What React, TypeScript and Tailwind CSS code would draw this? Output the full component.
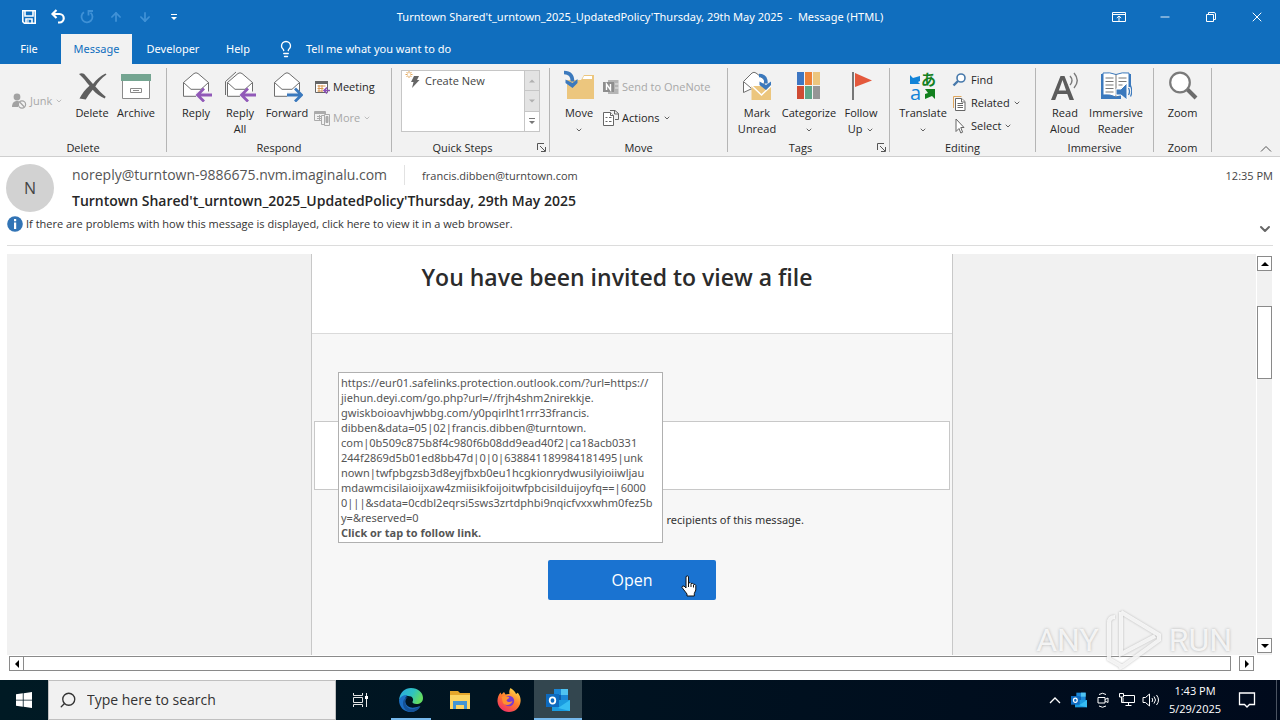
import * as React from "react";
import { clsx } from "clsx";
import { ArrowDown, ArrowUp, ChevronDown, Lightbulb, Minus, Search, X } from "lucide-react";

type IconProps = { className?: string };

/* ---------- Title bar icons ---------- */

const SaveIcon = () => (
    <svg viewBox="0 0 16 16" className="w-4 h-4" fill="none" stroke="currentColor" strokeWidth="1.6">
        <path d="M1.8 1.8h12.4v12.4H3.4L1.8 12.6z" />
        <path d="M4 2v5h8V2M5 14v-4h6v4" />
        <path d="M7 11v3" strokeWidth="1.2" />
    </svg>
);

const UndoIcon = () => (
    <svg viewBox="0 0 16 16" className="w-4 h-4" fill="none" stroke="currentColor" strokeWidth="2.2">
        <path d="M6.5 1 2.5 5l4 4M3 5h6.5a4.2 4.2 0 0 1 0 8.5H8" />
    </svg>
);

const RedoIcon = () => (
    <svg viewBox="0 0 16 16" className="w-4 h-4" fill="none" stroke="currentColor" strokeWidth="1.8">
        <path d="M5 3.2A5.5 5.5 0 1 0 11.5 3.6M14 2H9.5v4.5" />
    </svg>
);

const CustomizeIcon = () => (
    <svg viewBox="0 0 8 8" className="w-2 h-2" fill="currentColor">
        <path d="M1 1h6v1H1zM1 4h6L4 7z" />
    </svg>
);

const RibbonOptionsIcon = () => (
    <svg viewBox="0 0 14 12" className="w-3.5 h-3" fill="none" stroke="currentColor">
        <path d="M.5 1.5h13v9H.5zM.5 3.5h13M7 10V5M4.8 7 7 5l2.2 2" />
    </svg>
);

const RestoreIcon = () => (
    <svg viewBox="0 0 12 12" className="w-3 h-3" fill="none" stroke="currentColor">
        <path d="M1.5 3.5h7v7h-7zM3.5 3.5v-2H9A1.5 1.5 0 0 1 10.5 3v5.5h-2" />
    </svg>
);

/* ---------- Ribbon icons ---------- */

const JunkIcon = () => (
    <svg viewBox="0 0 16 16" className="w-4 h-4">
        <circle cx="6" cy="4" r="3.4" fill="#a3a3a3" />
        <path d="M1 14c0-4 2-6 5-6 1.5 0 2 .4 2.5.8L7 14z" fill="#a3a3a3" />
        <circle cx="11" cy="11.5" r="3.6" fill="#f2f2f2" stroke="#a3a3a3" strokeWidth="1.2" />
        <path d="m8.6 9 4.8 5" stroke="#a3a3a3" strokeWidth="1.2" />
    </svg>
);

const DeleteIcon = () => (
    <svg viewBox="0 0 32 32" className="w-8 h-8" fill="#5f5f5f">
        <path d="M3 4c2.5-1.5 5-1 6.5 1.5L17 14C20.5 9.5 24.5 6 29.5 3.5l1 .9C25.5 8 22 12 19.3 16.5c3 3.5 6.4 7 10.4 10.3l-1 1.8c-4.7-2-8.7-5-12-8.8-2.7 3-5 6.2-7 9.7L3.5 28.5C6 23.5 9.5 19.5 13.5 15.8 10 11.5 7 7.5 3 4z" />
    </svg>
);

const ArchiveIcon = () => (
    <svg viewBox="0 0 32 32" className="w-8 h-8">
        <path d="M2.5 9.5h27v19h-27z" fill="#fff" stroke="#8a8a8a" />
        <path d="M1 4h30v7H1z" fill="#74a591" />
        <path d="M10.5 18.5h11v4h-11z" fill="#fff" stroke="#8a8a8a" />
        <path d="M13 20.5h6" stroke="#8a8a8a" />
    </svg>
);

const Envelope = ({ double = false }: { double?: boolean }) => (
    <>
        {double && <path d="M1.5 25V11.5L12 2" fill="none" stroke="#6e6e6e" />}
        <path d="M3.5 12.5 14 3.5q2-1.4 4 0l10.5 9v13.8h-25z" fill="#fff" stroke="#6e6e6e" />
        <path d="m3.5 12.5 7.5 6.8h10l7.5-6.8" fill="none" stroke="#6e6e6e" />
    </>
);

const ReplyIcon = ({ double = false }: { double?: boolean }) => (
    <svg viewBox="0 0 32 32" className="w-8 h-8">
        <Envelope double={double} />
        <path d="M16 25h16" stroke="#f2f2f2" strokeWidth="7" />
        <path d="M32 25H18M24 18.5 17.5 25l6.5 6.5" fill="none" stroke="#9159b8" strokeWidth="2.8" />
    </svg>
);

const ForwardIcon = () => (
    <svg viewBox="0 0 32 32" className="w-8 h-8">
        <Envelope />
        <path d="M16 25h16" stroke="#f2f2f2" strokeWidth="7" />
        <path d="M16 25h14M24 18.5l6.5 6.5-6.5 6.5" fill="none" stroke="#3b79bd" strokeWidth="2.8" />
    </svg>
);

const MeetingIcon = () => (
    <svg viewBox="0 0 16 16" className="w-4 h-4">
        <path d="M1.5 2.5h12v11h-12z" fill="#fff" stroke="#666" />
        <path d="M1 2h13v3H1z" fill="#666" />
        <path d="M3.5 7h8M3.5 9.5h6M3.5 12h5M5 6v7M8 6v7" stroke="#d89752" fill="none" />
        <path d="M16 11.5h-5.5M13 8.5l-3 3 3 3" fill="none" stroke="#8a4fb5" strokeWidth="1.6" />
    </svg>
);

const MoreIcon = () => (
    <svg viewBox="0 0 16 16" className="w-4 h-4" fill="none" stroke="#ababab">
        <path d="M.5 1.5h11v9H.5z" />
        <path d="M.5 3h11" strokeWidth="2" />
        <path d="M3 6.5h5M3 8.5h5M5.5 5v5" />
        <path d="M7.5 5.5h3v9h-3zM10.5 4.5h5v11h-5z" fill="#f2f2f2" />
        <path d="M12 6.5h2v6h-2z" fill="#ababab" />
    </svg>
);

const QuickStepIcon = () => (
    <svg viewBox="0 0 16 18" className="w-4 h-[18px]">
        <path d="M9 5h5l-2 4h2.5L7 17l1.5-6H6z" fill="#666" />
        <path d="M4 0v7M.5 3.5h7M1.5 1l5 5M6.5 1l-5 5" stroke="#e0a558" />
        <circle cx="4" cy="3.5" r="1.5" fill="#fff" />
    </svg>
);

const MoveIcon = () => (
    <svg viewBox="0 0 32 32" className="w-8 h-8">
        <path d="M4 10h14l3-5h10v24H4z" fill="#ecc67e" />
        <path d="M21 6h8v3h-9.5z" fill="#fff" />
        <path d="M1 2.5c5 0 8.5 2 8.5 9" fill="none" stroke="#3b79bd" strokeWidth="3.6" />
        <path d="M2.5 9.5v3.5l7 5 5-5V9l-5 4z" fill="#3b79bd" />
    </svg>
);

const OneNoteIcon = () => (
    <svg viewBox="0 0 16 16" className="w-4 h-4">
        <path d="M5 1h10.5v14H5z" fill="#b5b5b5" />
        <path d="M12 5h3.5M12 9h3.5" stroke="#e8e8e8" />
        <path d="M0 3h11v10H0z" fill="#8e8e8e" />
        <path d="M3.5 11V5l4 6V5" fill="none" stroke="#fff" strokeWidth="1.4" />
    </svg>
);

const ActionsIcon = () => (
    <svg viewBox="0 0 16 16" className="w-4 h-4" fill="#fff" stroke="#666">
        <path d="M.5 2.5h7l3 3v10H.5z" />
        <path d="M2.5 7.5h2M2.5 11.5h2M6 7.5h2.5M6 11.5h2.5M7.5 2.5v3h3" />
        <path d="M7 .5h5l3.5 3v6H12M11.5.5v3.5h4" fill="none" />
    </svg>
);

const MarkUnreadIcon = () => (
    <svg viewBox="0 0 32 32" className="w-8 h-8">
        <path d="M2.5 22.5v-11L11 3q2-1.5 4 0l9 7-2 8-12 1-7.500 3.5z" fill="#fff" stroke="#6e6e6e" />
        <path d="m3 12 7 6" stroke="#6e6e6e" />
        <path d="M10.5 16H30v14H10.5z" fill="#ecc67e" />
        <path d="m11 16 9.5 9 9.5-9" fill="none" stroke="#fff" strokeWidth="1.5" />
        <path d="M18 5.5c5 0 7 2 7 8" fill="none" stroke="#3b79bd" strokeWidth="3.6" />
        <path d="M18.5 11.5v3.5l6.5 5 5-5v-3.5l-5 3.5z" fill="#3b79bd" />
    </svg>
);

const CategorizeIcon = () => (
    <svg viewBox="0 0 32 32" className="w-8 h-8">
        <path d="M4 2h7v13H4z" fill="#3d76c2" />
        <path d="M12 2h7v13h-7z" fill="#ec8138" />
        <path d="M20 2h7v13h-7z" fill="#ecc67e" />
        <path d="M4 16h7v13H4z" fill="#cf4b33" />
        <path d="M12 16h7v13h-7z" fill="#5fa588" />
        <path d="M20 16h7v13h-7z" fill="#969696" />
    </svg>
);

const FlagIcon = () => (
    <svg viewBox="0 0 32 32" className="w-8 h-8">
        <path d="M8 2v28" stroke="#777" strokeWidth="2" />
        <path d="m10 3 17 7.5L10 17z" fill="#e4593c" />
    </svg>
);

const TranslateIcon = () => (
    <svg viewBox="0 0 32 32" className="w-8 h-8 overflow-visible">
        <path d="M3 5l3 3 7-2v5l-2 1 2 2H3z" fill="#1283d8" />
        <path d="M18 19h10v10l-3-3-7 3v-5l3-1z" fill="#13801f" />
        <text x="14" y="15" fontSize="15" fontWeight="700" fill="#13801f" className="font-['Noto_Sans_CJK_JP',sans-serif]">あ</text>
        <text x="3" y="30" fontSize="20" fill="#1283d8" className="font-['Open_Sans',sans-serif]">a</text>
    </svg>
);

const FindIcon = () => (
    <svg viewBox="0 0 16 16" className="w-4 h-4" fill="none" stroke="#4779ab">
        <circle cx="9" cy="6" r="4" strokeWidth="1.6" fill="#fff" />
        <path d="m6 9-4.5 4.5" strokeWidth="2.4" />
    </svg>
);

const RelatedIcon = () => (
    <svg viewBox="0 0 16 16" className="w-4 h-4" fill="#fff">
        <path d="M1.5 13V1.5h8" fill="none" stroke="#dfa75f" />
        <path d="M3.5 3.5h6l3.5 3v9H3.5z" stroke="#666" />
        <path d="M9.5 3.5v3.5h3.5M5.5 8.5h5.5M5.5 10.5h5.5M5.5 12.5h5.5" stroke="#666" />
    </svg>
);

const SelectIcon = () => (
    <svg viewBox="0 0 16 16" className="w-4 h-4">
        <path d="M4 1v12.5l3-3 1.8 4.5 1.8-.8L8.8 9.5H12z" fill="#fff" stroke="#666" />
    </svg>
);

const ReadAloudIcon = () => (
    <svg viewBox="0 0 32 32" className="w-8 h-8">
        <path d="M2 30 11.5 6h4L25 30h-4.500l-2.200-6H8.500l-2.300 6zM9.800 20.500h7.300L13.500 10z" fill="#5b5b5b" />
        <path d="M21 6q4 4.500 0 9M25 3q6.500 7.500 0 15" fill="none" stroke="#7a7a7a" strokeWidth="1.4" />
    </svg>
);

const ImmersiveReaderIcon = () => (
    <svg viewBox="0 0 32 32" className="w-8 h-8">
        <path d="M1 4h30v25H1z" fill="#3b79bd" />
        <path d="M3 3q7-1 13 1.500Q22 2 29 3v22q-7-1-13 2-6-3-13-2z" fill="#fff" stroke="#3b79bd" />
        <path d="M16 4.500V27M5.500 8h8M5.500 11.500h8M5.500 15h8M5.500 18.500h8M5.500 22h8M18.500 8h8M18.500 11.500h8M18.500 15h4" stroke="#777" fill="none" />
        <path d="M21 17h11v15H21z" fill="#f2f2f2" />
        <path d="M16 19h5l6-6v17l-6-5h-5z" fill="#3b79bd" stroke="#fff" />
        <path d="M28.500 18q2 3.500 0 7M30.500 15.500q2.500 6 0 11" fill="none" stroke="#3b79bd" strokeWidth="1.3" />
    </svg>
);

const ZoomIcon = () => (
    <svg viewBox="0 0 32 32" className="w-8 h-8">
        <path d="m20 19 9 9" stroke="#6b6b6b" strokeWidth="4" />
        <circle cx="13" cy="12.5" r="9.8" fill="#fff" stroke="#7a7a7a" strokeWidth="2.2" />
    </svg>
);

const LauncherIcon = () => (
    <svg viewBox="0 0 9 9" className="w-[9px] h-[9px]" fill="none" stroke="#555">
        <path d="M.5 7V.5H7M3 3l5 5M8.5 4v4.5H4" />
    </svg>
);

/* ---------- Taskbar icons ---------- */

const WindowsIcon = () => (
    <svg viewBox="0 0 16 16" className="w-4 h-4" fill="#fff">
        <path d="M0 2.3 6.8 1.3v6.4H0zM7.6 1.2 16 0v7.7H7.6zM0 8.4h6.8v6.4L0 13.8zM7.6 8.4H16V16l-8.4-1.2z" />
    </svg>
);

const TaskViewIcon = () => (
    <svg viewBox="0 0 16 16" className="w-4 h-4" fill="none" stroke="#e6e6e6">
        <path d="M1.5 1v2.5h9V1M1.5 15v-2.5h9V15M1.5 5.5h9v5h-9zM14.5 1v14" />
        <path d="M13 4h3v3h-3z" fill="#fff" stroke="none" />
    </svg>
);

const EdgeIcon = () => (
    <svg viewBox="0 0 24 24" className="w-6 h-6">
        <defs>
            <linearGradient id="edgeTop" x1="0" y1="0" x2="1" y2="0.4">
                <stop offset="0" stopColor="#2aa6e6" />
                <stop offset="0.6" stopColor="#2fc3c0" />
                <stop offset="1" stopColor="#62dc62" />
            </linearGradient>
        </defs>
        <path d="M0 12C1 4 6 0 12 0c7 0 12 4.5 12 10 0 4-3 6-6.5 6-3 0-4.5-1-4-2.2 1.4-2 .7-5.8-4.5-5.8-4 0-7.5 1.5-9 4z" fill="url(#edgeTop)" />
        <path d="M0 12c1.5-4 5-5.5 9-5-3 2-3.5 5-2.5 8 1.2 4 6 6.5 14.5 3-2 4-5.5 6-9.5 6C5 24 0 19 0 12z" fill="#1c6fc4" />
        <path d="M9 9c-3 2-3.3 6-1.5 9 2.5 4 8.5 3.5 14 0-1.5 3.5-5 6-9 6-5 0-8.5-4-8.5-8.5C4 12 6 9.5 9 9z" fill="#155297" />
    </svg>
);

const ExplorerIcon = () => (
    <svg viewBox="0 0 24 24" className="w-6 h-6">
        <path d="M2 3h8l2 2h10v16H2z" fill="#e5a72c" />
        <path d="M2 7h20v14H2z" fill="#fcd563" />
        <path d="M5 13h14v8h-3v-4H8v4H5z" fill="#4295d3" />
    </svg>
);

const FirefoxIcon = () => (
    <svg viewBox="0 0 24 24" className="w-6 h-6">
        <defs>
            <linearGradient id="foxBody" x1="0.8" y1="0" x2="0.2" y2="1">
                <stop offset="0" stopColor="#ffe14a" />
                <stop offset="0.5" stopColor="#ff7a2c" />
                <stop offset="1" stopColor="#f02a6b" />
            </linearGradient>
        </defs>
        <path d="M13.5 0c3 2 5 4 5.5 6l1.8-1.2C23 7.5 24 10.5 23.5 14 22.6 20 18 24 12 24S1 19.5.5 13.5C.3 10 1.5 7 3.5 4.500l1 2L7 4l1.5 2.500c2-.5 3.500-.5 4-.5-.5-2-.3-4 1-6z" fill="url(#foxBody)" />
        <circle cx="12" cy="13" r="5.2" fill="#7a3ad0" />
        <path d="M4.5 9c3-2 5 0 7.5 0 1 1.5-2 2-2.5 3.5 1 2 4 2 6 .5-1 4-7 5.5-9.5 2C5 13 5.500 11 4.500 9z" fill="#ff9130" />
    </svg>
);

const OutlookIcon = ({ className }: IconProps) => (
    <svg viewBox="0 0 24 24" className={className}>
        <path d="M8 1h14v12H8z" fill="#1a86d6" />
        <path d="M15 1h7v6h-7z" fill="#50c3f0" />
        <path d="M8 7h7v6H8z" fill="#0f5ea8" />
        <path d="M6 12h18v11H6z" fill="#1a9be0" />
        <path d="m24 12-12 8 12 3z" fill="#36bdf2" />
        <path d="M0 6h13v13H0z" fill="#0d6abf" />
        <ellipse cx="6.5" cy="12.5" rx="2.8" ry="3.2" fill="none" stroke="#fff" strokeWidth="1.8" />
    </svg>
);

const CameraIcon = () => (
    <svg viewBox="0 0 16 16" className="w-4 h-4" fill="none" stroke="#fff">
        <path d="M3 5.5h7v5.5H3zM10 7.500l3-1.5v4.500L10 9M4 2.500q3.500-2.500 7 0M4 14q3.500 2.500 7 0" />
    </svg>
);

const NetworkIcon = () => (
    <svg viewBox="0 0 16 16" className="w-4 h-4" fill="none" stroke="#fff">
        <path d="M5 3.5h10.5v7H4V6M9.5 10.5v3M6.5 13.5h6" />
        <path d="M.5 1.5h4v3.5h-4zM2.5 5v5.5H4" />
    </svg>
);

const SpeakerIcon = () => (
    <svg viewBox="0 0 18 16" className="w-[18px] h-4" fill="none" stroke="#fff">
        <path d="M1 5.5h2.5l4-3.5v12l-4-3.5H1zM10 6q1.5 2 0 4M12 4.5q3 3.5 0 7M14.5 3q4 5 0 10" />
    </svg>
);

const NoticeIcon = () => (
    <svg viewBox="0 0 18 18" className="w-[18px] h-[18px]" fill="none" stroke="#fff" strokeWidth="1.3">
        <path d="M1.5 2h15v11.5h-5L9 16l-2.5-2.5h-5z" />
    </svg>
);

const HandCursor = ({ className }: IconProps) => (
    <svg viewBox="0 0 16 22" className={className}>
        <path
            d="M5 1.5q1.5-1.2 2.5 0V8q2-1 2.5.5 2-.8 2.5.8 2-.5 2.3 1.2V15l-1.5 3.5V21H6v-2L1 12.5q0-2 2-1.5l2 2z"
            fill="#fff"
            stroke="#111"
        />
        <path d="M7.5 8v4M10 9v3M12.5 10v2.5" stroke="#111" fill="none" />
    </svg>
);

/* ---------- Ribbon pieces ---------- */

const Caret = () => <ChevronDown className="inline w-2 h-2 opacity-70" strokeWidth={3} />;

interface RibbonGroupProps {
    label: string;
    className: string;
    inset?: string;
    launcher?: boolean;
    children: React.ReactNode;
}

const RibbonGroup: React.FC<RibbonGroupProps> = ({ label, className, inset, launcher, children }) => (
    <section aria-label={label} className={clsx("relative flex flex-col shrink-0 my-1 border-r border-[#b5b5b5]", className)}>
        <div className={clsx("flex shrink-0 h-[72px] pt-0.5", inset)}>{children}</div>
        <div className={clsx("text-center leading-4", launcher && "pr-4")}>{label}</div>
        {launcher && (
            <button aria-label={`${label} settings`} className="absolute right-[3px] bottom-0">
                <LauncherIcon />
            </button>
        )}
    </section>
);

interface BigButtonProps {
    icon: React.ReactNode;
    lines: string[];
    className: string;
    menu?: "below" | "inline";
}

const BigButton: React.FC<BigButtonProps> = ({ icon, lines, className, menu }) => (
    <button className={clsx("flex flex-col items-center shrink-0 leading-4 whitespace-nowrap", className)}>
        {icon}
        <span className="pt-[3px]">
            {lines.map((line, i) => (
                <span key={line} className="block">
                    {line}
                    {menu === "inline" && i === lines.length - 1 && <span className="pl-1"><Caret /></span>}
                </span>
            ))}
            {menu === "below" && <span className="block"><Caret /></span>}
        </span>
    </button>
);

interface SmallButtonProps {
    icon: React.ReactNode;
    label: string;
    menu?: boolean;
    disabled?: boolean;
}

const SmallButton: React.FC<SmallButtonProps> = ({ icon, label, menu, disabled }) => (
    <button disabled={disabled} className={clsx("flex items-center gap-[3px] h-5 whitespace-nowrap", disabled && "text-[#a8a8a8]")}>
        {icon}
        {label}
        {menu && <Caret />}
    </button>
);

const Ribbon = () => (
    <div className="flex h-[93px] bg-[#f2f2f2] border-b border-[#cfcfcf] text-[#262626]">
        <RibbonGroup label="Delete" className="w-[167px]">
            <div className="w-[70px] pt-[21px] pl-[11px]">
                <SmallButton icon={<JunkIcon />} label="Junk" menu disabled />
            </div>
            <BigButton icon={<DeleteIcon />} lines={["Delete"]} className="w-11" />
            <BigButton icon={<ArchiveIcon />} lines={["Archive"]} className="w-11" />
        </RibbonGroup>
        <RibbonGroup label="Respond" className="w-[225px]" inset="pl-[7px]">
            <BigButton icon={<ReplyIcon />} lines={["Reply"]} className="w-11" />
            <BigButton icon={<ReplyIcon double />} lines={["Reply", "All"]} className="w-11" />
            <BigButton icon={<ForwardIcon />} lines={["Forward"]} className="w-[50px]" />
            <div className="flex flex-col gap-[11px] pt-[7px] pl-0.5">
                <SmallButton icon={<MeetingIcon />} label="Meeting" />
                <SmallButton icon={<MoreIcon />} label="More" menu disabled />
            </div>
        </RibbonGroup>
        <RibbonGroup label="Quick Steps" className="w-[158px]" inset="px-[9px]" launcher>
            <div className="flex w-full h-[62px] bg-white border border-[#c6c6c6] text-[#444]">
                <button className="flex items-start gap-1 flex-1 pl-[3px]">
                    <QuickStepIcon />
                    <span className="pt-0.5">Create New</span>
                </button>
                <div className="flex flex-col w-[15px] border-l border-[#c6c6c6] text-[#777]">
                    <button aria-label="Scroll up" className="flex flex-1 items-center justify-center bg-[#e3e3e3] text-[#b0b0b0]">
                        <svg viewBox="0 0 8 4" className="w-1.5 h-1" fill="currentColor"><path d="M0 4 4 0l4 4z" /></svg>
                    </button>
                    <button aria-label="Scroll down" className="flex flex-1 items-center justify-center bg-[#e3e3e3] border-y border-[#c6c6c6] text-[#b0b0b0]">
                        <svg viewBox="0 0 8 4" className="w-1.5 h-1" fill="currentColor"><path d="m0 0 4 4 4-4z" /></svg>
                    </button>
                    <button aria-label="More quick steps" className="flex flex-1 items-center justify-center">
                        <CustomizeIcon />
                    </button>
                </div>
            </div>
        </RibbonGroup>
        <RibbonGroup label="Move" className="w-[178px]" inset="pl-2">
            <BigButton icon={<MoveIcon />} lines={["Move"]} className="w-[42px]" menu="below" />
            <div className="flex flex-col gap-[11px] pt-[7px] pl-[3px]">
                <SmallButton icon={<OneNoteIcon />} label="Send to OneNote" disabled />
                <SmallButton icon={<ActionsIcon />} label="Actions" menu />
            </div>
        </RibbonGroup>
        <RibbonGroup label="Tags" className="w-[162px]" inset="pl-[5px]" launcher>
            <BigButton icon={<MarkUnreadIcon />} lines={["Mark", "Unread"]} className="w-12" />
            <BigButton icon={<CategorizeIcon />} lines={["Categorize"]} className="w-14" menu="below" />
            <BigButton icon={<FlagIcon />} lines={["Follow", "Up"]} className="w-12" menu="inline" />
        </RibbonGroup>
        <RibbonGroup label="Editing" className="w-[146px]" inset="pl-[7px]">
            <BigButton icon={<TranslateIcon />} lines={["Translate"]} className="w-[52px]" menu="below" />
            <div className="flex flex-col gap-[3px] pl-[3px]">
                <SmallButton icon={<FindIcon />} label="Find" />
                <SmallButton icon={<RelatedIcon />} label="Related" menu />
                <SmallButton icon={<SelectIcon />} label="Select" menu />
            </div>
        </RibbonGroup>
        <RibbonGroup label="Immersive" className="w-[118px]" inset="pl-[7px]">
            <BigButton icon={<ReadAloudIcon />} lines={["Read", "Aloud"]} className="w-11" />
            <BigButton icon={<ImmersiveReaderIcon />} lines={["Immersive", "Reader"]} className="w-[58px]" />
        </RibbonGroup>
        <RibbonGroup label="Zoom" className="w-[58px]">
            <BigButton icon={<ZoomIcon />} lines={["Zoom"]} className="w-full" />
        </RibbonGroup>
        <button aria-label="Collapse ribbon" className="self-end ml-auto mr-2 mb-1">
            <svg viewBox="0 0 12 6" className="w-3 h-1.5" fill="none" stroke="#555">
                <path d="m1 5.5 5-5 5 5" />
            </svg>
        </button>
    </div>
);

/* ---------- Window chrome ---------- */

const TitleBar = () => (
    <header className="bg-[#106ebe] text-white font-['Noto_Sans','Open_Sans',sans-serif]">
        <div className="grid grid-cols-[1fr_auto_1fr] items-center h-[34px]">
            <div className="flex items-center pl-[14px]">
                {[
                    { label: "Save", icon: <SaveIcon /> },
                    { label: "Undo", icon: <UndoIcon /> },
                    { label: "Redo", icon: <RedoIcon />, off: true },
                    { label: "Previous", icon: <ArrowUp className="w-3.5 h-3.5" strokeWidth={3} />, off: true },
                    { label: "Next", icon: <ArrowDown className="w-3.5 h-3.5" strokeWidth={3} />, off: true },
                    { label: "Customize", icon: <CustomizeIcon /> },
                ].map(({ label, icon, off }) => (
                    <button key={label} aria-label={label} disabled={off} className={clsx("flex items-center justify-center w-[29px] h-8", off && "text-[#3f91d6]")}>
                        {icon}
                    </button>
                ))}
            </div>
            <h1 className="whitespace-pre">Turntown Shared't_urntown_2025_UpdatedPolicy'Thursday, 29th May 2025  -  Message (HTML)</h1>
            <div className="flex justify-end">
                {[
                    { label: "Ribbon display options", icon: <RibbonOptionsIcon /> },
                    { label: "Minimize", icon: <Minus className="w-3.5 h-3.5" strokeWidth={1.5} /> },
                    { label: "Restore", icon: <RestoreIcon /> },
                    { label: "Close", icon: <X className="w-4 h-4" strokeWidth={1.5} /> },
                ].map(({ label, icon }) => (
                    <button key={label} aria-label={label} className="flex items-center justify-center w-[46px] h-[30px]">
                        {icon}
                    </button>
                ))}
            </div>
        </div>
        <nav className="flex items-center h-[30px]">
            <button className="w-[58px]">File</button>
            <button className="w-[71px] h-full ml-[3px] bg-[#f2f2f2] text-[#106ebe]">Message</button>
            <button className="w-[82px]">Developer</button>
            <button className="w-12">Help</button>
            <button className="flex items-center gap-[11px] pl-[15px]">
                <Lightbulb className="w-[18px] h-[18px]" strokeWidth={1.8} />
                Tell me what you want to do
            </button>
        </nav>
    </header>
);

const MessageHeader = () => (
    <div className="mx-[7px] h-[89px] border-b border-[#dcdcdc] text-[#444]">
        <div className="flex pt-[7px]">
            <div className="flex items-center justify-center shrink-0 w-12 h-12 -ml-px rounded-full bg-[#d2d2d2] text-base text-[#444]">N</div>
            <div className="flex-1 pl-[18px]">
                <div className="flex items-center h-[22px]">
                    <span className="text-sm text-[#555]">noreply@turntown-9886675.nvm.imaginalu.com</span>
                    <span className="w-px h-5 mx-[17px] bg-[#e2e2e2]" />
                    <span className="pt-0.5">francis.dibben@turntown.com</span>
                    <time className="ml-auto pt-0.5">12:35 PM</time>
                </div>
                <h2 className="pt-[3px] text-sm leading-6 font-semibold text-[#262626]">Turntown Shared't_urntown_2025_UpdatedPolicy'Thursday, 29th May 2025</h2>
            </div>
        </div>
        <div className="flex gap-[3px] h-6 pt-0.5">
            <svg viewBox="0 0 16 16" className="w-4 h-4 mt-px">
                <circle cx="8" cy="8" r="7.8" fill="#3274b5" />
                <path d="M7 6.5h2.2V13H7zM7 3h2.2v2.2H7z" fill="#fff" />
            </svg>
            <button className="leading-[18px] self-start text-[#333]">If there are problems with how this message is displayed, click here to view it in a web browser.</button>
            <button aria-label="Expand header" className="self-end ml-auto">
                <ChevronDown className="w-4 h-4" stroke="#666" strokeWidth={3} />
            </button>
        </div>
    </div>
);

/* ---------- Message body ---------- */

const linkLines = [
    "https://eur01.safelinks.protection.outlook.com/?url=https://",
    "jiehun.deyi.com/go.php?url=//frjh4shm2nirekkje.",
    "gwiskboioavhjwbbg.com/y0pqirlht1rrr33francis.",
    "dibben&data=05|02|francis.dibben@turntown.",
    "com|0b509c875b8f4c980f6b08dd9ead40f2|ca18acb0331",
    "244f2869d5b01ed8bb47d|0|0|638841189984181495|unk",
    "nown|twfpbgzsb3d8eyjfbxb0eu1hcgkionrydwusilyioiiwljau",
    "mdawmcisilaioijxaw4zmiisikfoijoitwfpbcisilduijoyfq==|6000",
    "0|||&sdata=0cdbl2eqrsi5sws3zrtdphbi9nqicfvxxwhm0fez5b",
    "y=&reserved=0",
];

const LinkTooltip = () => (
    <div role="tooltip" className="absolute left-[26px] top-[118px] w-[325px] h-[171px] pl-0.5 pt-0.5 bg-white border border-[#b0b0b0] font-['Noto_Sans','Open_Sans',sans-serif] leading-[15px] text-[#555] whitespace-nowrap">
        {linkLines.map((line) => (
            <div key={line}>{line}</div>
        ))}
        <div className="font-['Open_Sans',sans-serif] font-bold">Click or tap to follow link.</div>
    </div>
);

const arrows = {
    up: "M0 6 4 2l4 4z",
    down: "m0 2 4 4 4-4z",
    left: "M6 0 2 4l4 4z",
    right: "m2 0 4 4-4 4z",
};

const ScrollButton = ({ dir }: { dir: keyof typeof arrows }) => (
    <button aria-label={`Scroll ${dir}`} className="flex items-center justify-center shrink-0 w-[15px] h-[15px] bg-white border border-[#8a8a8a]">
        <svg viewBox="0 0 8 8" className="w-2 h-2"><path d={arrows[dir]} /></svg>
    </button>
);

const Watermark = () => (
    <div className="absolute right-12 bottom-2 flex items-center gap-1.5 pointer-events-none font-[Roboto,'Liberation_Sans',sans-serif] text-[32px] leading-[60px] text-white/80 [text-shadow:0_0_3px_#b0b0b0]">
        <span>ANY</span>
        <svg viewBox="0 0 58 64" className="w-[58px] h-16 drop-shadow-[0_0_1px_#aaa]" fill="none" stroke="#fff" strokeOpacity="0.8" strokeWidth="4">
            <path d="M10 9q-6 0-6 6v36l12 7M16 4l38 23v5L18 58l-4 2M16 4v42l34-18" />
        </svg>
        <span>RUN</span>
    </div>
);

const MessageBody = () => (
    <main className="relative flex flex-col flex-1 pl-[7px] pr-2 pt-2 pb-[9px]">
        <div className="flex flex-1">
            <div className="flex flex-1 justify-center bg-[#f1f1f1] pl-px">
                <article className="relative w-[642px] border-x border-[#c8c8c8] bg-[#f7f7f7]">
                    <div className="h-20 pt-[5px] pr-[30px] bg-white border-b border-[#dadada] text-center text-[23px] leading-9 font-semibold text-[#2b2b2b]">
                        You have been invited to view a file
                    </div>
                    <div className="h-[69px] mx-0.5 mt-[87px] bg-white border border-[#c8c8c8]" />
                    <p className="pt-5 pr-[148px] text-right leading-5 text-[#333] font-['Noto_Sans','Open_Sans',sans-serif]">recipients of this message.</p>
                    <div className="flex justify-center pt-[30px]">
                        <a href="#open" className="relative w-42 h-10 rounded-xs bg-[#1a73d1] text-center text-base leading-10 text-white">
                            Open
                            <HandCursor className="absolute left-[133px] top-[15px] w-4 h-[22px]" />
                        </a>
                    </div>
                    <LinkTooltip />
                </article>
            </div>
            <div className="flex flex-col ml-px w-[15px] bg-[#f1f1f1]">
                <div className="h-0.5 bg-white" />
                <ScrollButton dir="up" />
                <div className="h-[73px] mt-[35px] bg-white border border-[#8a8a8a]" />
                <div className="flex flex-1 flex-col justify-end pb-0.5">
                    <ScrollButton dir="down" />
                </div>
            </div>
        </div>
        <div className="flex pt-px pl-0.5 pr-[18px]">
            <ScrollButton dir="left" />
            <div className="flex-1 h-[15px] -ml-px mr-2 bg-white border border-[#8a8a8a]" />
            <ScrollButton dir="right" />
        </div>
        <Watermark />
    </main>
);

/* ---------- Taskbar ---------- */

const apps = [
    { label: "Edge", icon: <EdgeIcon />, running: true },
    { label: "File Explorer", icon: <ExplorerIcon /> },
    { label: "Firefox", icon: <FirefoxIcon /> },
    { label: "Outlook", icon: <OutlookIcon className="w-6 h-6" />, running: true, active: true },
];

const Taskbar = () => (
    <footer className="flex h-10 bg-linear-to-r from-[#001a24] to-[#000a1c] text-white">
        <button aria-label="Start" className="flex items-center justify-center w-12">
            <WindowsIcon />
        </button>
        <label className="flex items-center w-72 pl-2.5 gap-2.5 bg-[#f1f1f1] border border-[#c0c0c0] text-[#333]">
            <Search className="w-[18px] h-[18px] -scale-x-100" strokeWidth={1.8} />
            <input type="text" aria-label="Search" placeholder="Type here to search" className="w-60 bg-transparent text-sm outline-none placeholder:text-[#333]" />
        </label>
        <button aria-label="Task view" className="flex items-center justify-center w-12">
            <TaskViewIcon />
        </button>
        <div className="flex gap-px pl-[3px]">
            {apps.map(({ label, icon, running, active }) => (
                <button key={label} aria-label={label} className={clsx("relative flex items-center justify-center w-12", active && "bg-[#33464f]")}>
                    {icon}
                    {running && <span className={clsx("absolute bottom-0 h-0.5 bg-[#76b9ed]", active ? "inset-x-0" : "inset-x-1")} />}
                </button>
            ))}
        </div>
        <div className="flex items-center ml-auto">
            <button aria-label="Show hidden icons" className="flex justify-center w-6">
                <svg viewBox="0 0 12 7" className="w-3 h-[7px]" fill="none" stroke="#fff" strokeWidth="1.3">
                    <path d="m1 6 5-5 5 5" />
                </svg>
            </button>
            <button aria-label="Outlook status" className="flex justify-center w-6"><OutlookIcon className="w-4 h-4" /></button>
            <button aria-label="Meet now" className="flex justify-center w-6"><CameraIcon /></button>
            <button aria-label="Network" className="flex justify-center w-6"><NetworkIcon /></button>
            <button aria-label="Volume" className="flex justify-center w-6"><SpeakerIcon /></button>
            <button className="w-16 text-center leading-[18px]">
                <time className="block">1:43 PM</time>
                <time className="block">5/29/2025</time>
            </button>
            <button aria-label="Notifications" className="flex justify-center w-10"><NoticeIcon /></button>
            <span className="w-px h-10 ml-[9px] mr-[3px] bg-[#4a5361]" />
        </div>
    </footer>
);

export default function App() {
    return (
        <div className="flex flex-col min-h-screen bg-white font-['Open_Sans','Noto_Sans',sans-serif] text-[11px]">
            <TitleBar />
            <Ribbon />
            <MessageHeader />
            <MessageBody />
            <Taskbar />
        </div>
    );
}
